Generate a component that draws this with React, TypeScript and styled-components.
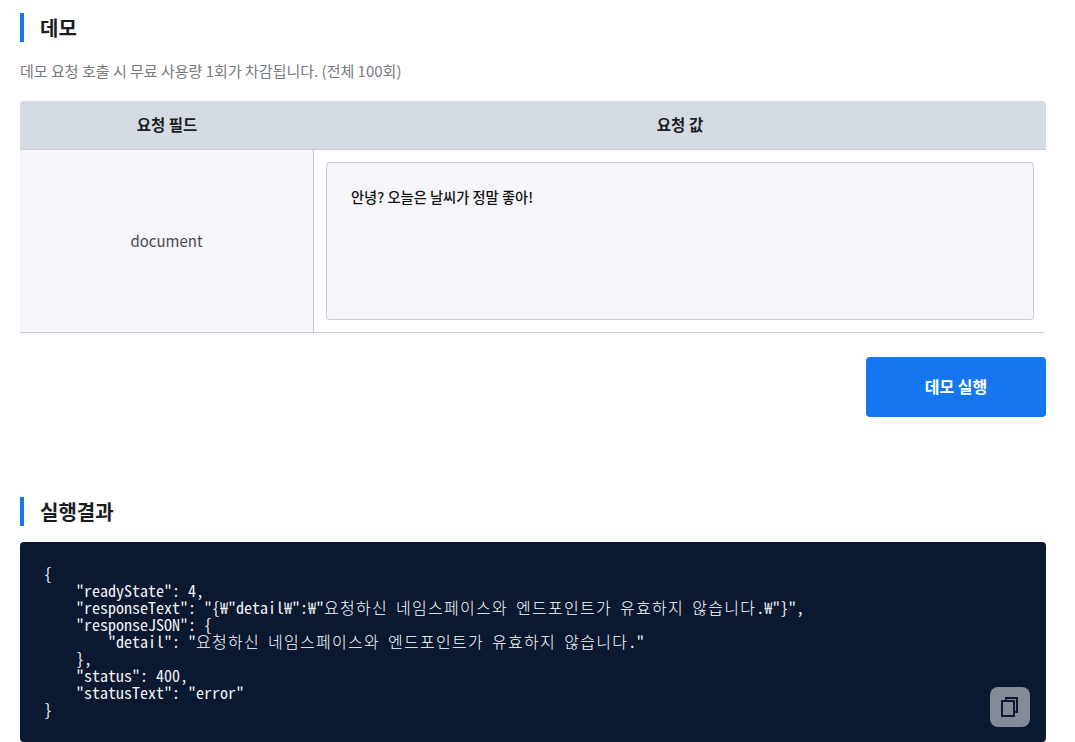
import React from "react";
import styled, { createGlobalStyle } from "styled-components";

const Global = createGlobalStyle`
  html, body { margin: 0; padding: 0; background: #fff; }
  body { font-family: "Noto Sans CJK KR", "Noto Sans", sans-serif; overflow: hidden; }
`;
const Page = styled.main`
  width: 1026px;
  height: 742px;
  margin-left: 20px;
  padding-top: 13px;
  box-sizing: border-box;
  display: flex;
  flex-direction: column;
`;
const Heading = styled.h2`
  margin: 0;
  height: 29px;
  border-left: 4px solid #1477f0;
  padding-left: 16px;
  font-size: 20px;
  font-weight: 700;
  line-height: 29px;
  color: #1b1d22;
`;
const Note = styled.p`
  margin: 18px 0 18px;
  height: 23px;
  font-size: 15px;
  line-height: 22px;
  color: #777a80;
`;
const Table = styled.div`
  display: grid;
  grid-template-columns: 294px 732px;
  width: 1026px;
`;
const HeadCell = styled.div`
  padding-bottom: 2px;
  height: 46px;
  background: #d5dbe3;
  border-bottom: 1px solid #c8ccd6;
  display: flex;
  align-items: center;
  justify-content: center;
  font-size: 15.5px;
  font-weight: 700;
  color: #1b1d22;
  &:first-child { border-top-left-radius: 4px; }
  &:nth-child(2) { border-top-right-radius: 4px; }
`;
const FieldCell = styled.div`
  padding-bottom: 2px;
  box-sizing: border-box;
  height: 183px;
  background: #f5f5fa;
  border-right: 1px solid #c8ccd6;
  border-bottom: 1px solid #c8ccd6;
  display: flex;
  align-items: center;
  justify-content: center;
  font-size: 15px;
  color: #4a4a4f;
`;
const ValueCell = styled.div`
  width: 708px;
  height: 158px;
  border-bottom: 1px solid #c8ccd6;
  padding: 12px 10px 12px 12px;
`;
const Input = styled.div`
  box-sizing: border-box;
  width: 708px;
  height: 158px;
  background: #f5f5fa;
  border: 1px solid #c8ccd6;
  border-radius: 4px;
  padding: 23px 24px;
  font-size: 14.25px;
  font-weight: 500;
  line-height: 22px;
  color: #111;
`;
const Actions = styled.div`
  display: flex;
  justify-content: flex-end;
  margin-top: 24px;
`;
const RunButton = styled.button`
  width: 180px;
  height: 60px;
  border: 0;
  border-radius: 4px;
  background: #1477f0;
  color: #fff;
  padding: 0 0 2px;
  font: 700 16px "Noto Sans CJK KR", sans-serif;
`;
const ResultHeading = styled(Heading)`
  margin-top: 80px;
`;
const Code = styled.div`
  position: relative;
  margin-top: 16px;
  height: 200px;
  box-sizing: border-box;
  background: #0a1830;
  border-radius: 4px;
  padding: 23px 24px;
`;
const Pre = styled.pre`
  margin: 0;
  font-family: "Noto Sans Mono CJK KR", "Liberation Mono", monospace;
  font-size: 16px;
  line-height: 17px;
  color: #f2f3f5;
`;
const Hangul = styled.span`
  font-family: "Noto Sans CJK KR", sans-serif;
  font-weight: 300;
  line-height: 0;
  letter-spacing: 1.28px;
  color: #fff;
`;
const CopyButton = styled.button`
  position: absolute;
  right: 16px;
  bottom: 15px;
  width: 40px;
  height: 40px;
  border: 0;
  border-radius: 8px;
  padding: 0;
  background: #848a96;
  display: flex;
  align-items: center;
  justify-content: center;
`;

const json = `{
    "readyState": 4,
    "responseText": "{₩"detail₩":₩"요청하신 네임스페이스와 엔드포인트가 유효하지 않습니다.₩"}",
    "responseJSON": {
        "detail": "요청하신 네임스페이스와 엔드포인트가 유효하지 않습니다."
    },
    "status": 400,
    "statusText": "error"
}`;

const parts = json.split(/([\uAC00-\uD7A3]+)/);

export default function App() {
  return (
    <Page>
      <Global />
      <Heading>데모</Heading>
      <Note>데모 요청 호출 시 무료 사용량 1회가 차감됩니다. (전체 100회)</Note>
      <Table>
        <HeadCell>요청 필드</HeadCell>
        <HeadCell>요청 값</HeadCell>
        <FieldCell>document</FieldCell>
        <ValueCell>
          <Input>안녕? 오늘은 날씨가 정말 좋아!</Input>
        </ValueCell>
      </Table>
      <Actions>
        <RunButton>데모 실행</RunButton>
      </Actions>
      <ResultHeading>실행결과</ResultHeading>
      <Code>
        <Pre>
          {parts.map((part, i) => (i % 2 ? <Hangul key={i}>{part}</Hangul> : part))}
        </Pre>
        <CopyButton aria-label="복사">
          <svg width="18" height="20" viewBox="0 0 18 20" fill="none" stroke="#0a1830" strokeWidth="2">
            <path d="M5 4V1h11v14h-3" />
            <rect x="1" y="4" width="12" height="15" />
          </svg>
        </CopyButton>
      </Code>
    </Page>
  );
}
